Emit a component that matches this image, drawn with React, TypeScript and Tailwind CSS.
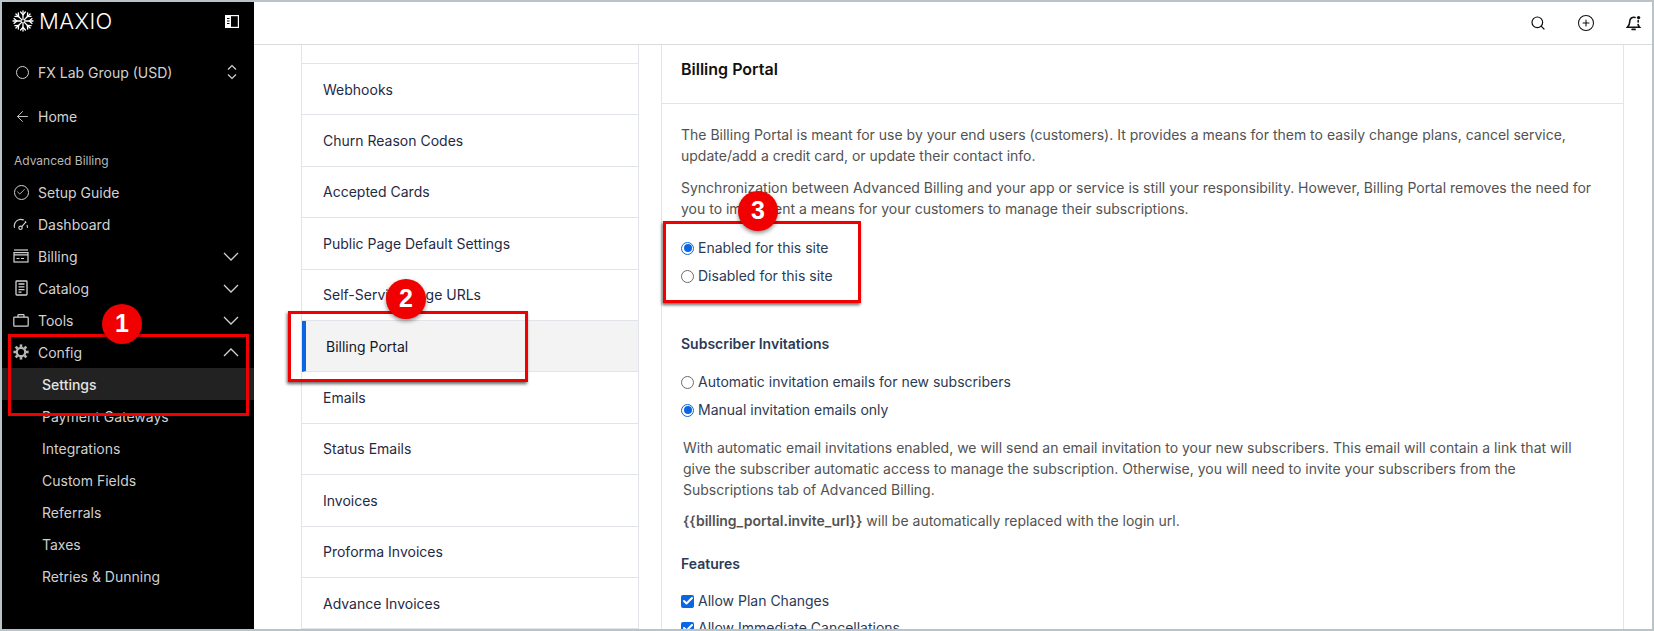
import { ArrowLeft, Check, Search, CirclePlus } from 'lucide-react';

const listRows = ['Webhooks', 'Churn Reason Codes', 'Accepted Cards', 'Public Page Default Settings', 'Self-Service Page URLs'];
const listRowsAfter = ['Emails', 'Status Emails', 'Invoices', 'Proforma Invoices', 'Advance Invoices'];
const subItems = ['Payment Gateways', 'Integrations', 'Custom Fields', 'Referrals', 'Taxes', 'Retries & Dunning'];

function MaxioLogo() {
  const spokes = [0, 45, 90, 135, 180, 225, 270, 315];
  return (
    <svg width="22" height="22" viewBox="0 0 22 22" fill="none" stroke="white" strokeWidth="1.3" strokeLinecap="round">
      {spokes.map((a) => (
        <g key={a} transform={`rotate(${a} 11 11)`}>
          <path d="M11 9.4V1" />
          <path d="M8.6 2L11 4.8L13.4 2" />
        </g>
      ))}
    </svg>
  );
}

function GaugeIcon() {
  return (
    <svg width="17" height="17" viewBox="0 0 17 17" fill="none" stroke="currentColor" strokeWidth="1.2" strokeLinecap="round">
      <path d="M1.5 11.5A7 7 0 0 1 11 3.6" />
      <path d="M13 5.5l.6.8M15 9.5l.4 2" />
      <circle cx="8" cy="12" r="1.8" />
      <path d="M9.3 10.7L13.5 6" />
    </svg>
  );
}

function CardIcon() {
  return (
    <svg width="16" height="14" viewBox="0 0 16 14" fill="none" stroke="currentColor" strokeWidth="1.2">
      <path d="M1 1h14" />
      <rect x="1" y="3.6" width="14" height="9.4" />
      <path d="M1 5.8h14M3.5 9.5h3M8 9.5h3" />
    </svg>
  );
}

function CatalogIcon() {
  return (
    <svg width="13" height="16" viewBox="0 0 13 16" fill="none" stroke="currentColor" strokeWidth="1.3">
      <rect x="1" y="1" width="11" height="14" rx="0.8" />
      <path d="M3.5 4h6M3.5 6.8h6M3.5 9.6h6M3.5 12.2h3" />
    </svg>
  );
}

function ToolsIcon() {
  return (
    <svg width="16" height="13" viewBox="0 0 16 13" fill="none" stroke="currentColor" strokeWidth="1.2">
      <rect x="0.8" y="3.2" width="14.4" height="9" rx="0.8" />
      <path d="M5 3.2V1.2a.5.5 0 0 1 .5-.5h5a.5.5 0 0 1 .5.5v2" />
    </svg>
  );
}

function GearIcon() {
  const teeth = [0, 45, 90, 135, 180, 225, 270, 315];
  return (
    <svg width="16" height="16" viewBox="0 0 16 16" fill="none" stroke="#b5b5b5">
      {teeth.map((a) => (
        <path key={a} d="M8 0.4V3" strokeWidth="2.6" transform={`rotate(${a} 8 8)`} />
      ))}
      <circle cx="8" cy="8" r="4.2" strokeWidth="2.2" />
    </svg>
  );
}

function SpreadChevrons() {
  return (
    <svg width="12" height="16" viewBox="0 0 12 16" fill="none" stroke="currentColor" strokeWidth="1.2">
      <path d="M2 5.5L6 1.5L10 5.5" />
      <path d="M2 10.5L6 14.5L10 10.5" />
    </svg>
  );
}

function Chevron({ up }: { up?: boolean }) {
  return (
    <svg width="16" height="9" viewBox="0 0 16 9" fill="none" stroke="currentColor" strokeWidth="1.3">
      <path d={up ? 'M1 8L8 1L15 8' : 'M1 1L8 8L15 1'} />
    </svg>
  );
}

function CollapseIcon() {
  return (
    <svg width="14" height="13" viewBox="0 0 14 13">
      <rect x="0.6" y="0.6" width="12.8" height="11.8" fill="none" stroke="white" strokeWidth="1.2" />
      <rect x="0.6" y="0.6" width="5.4" height="11.8" fill="white" />
      <path d="M2 3.5h2.5M2 6h2.5M2 8.5h2.5" stroke="black" strokeWidth="1" />
    </svg>
  );
}

function BellIcon() {
  return (
    <svg width="16" height="16" viewBox="0 0 16 16" fill="none" stroke="#111" strokeWidth="1.6" strokeLinecap="round">
      <path d="M9 2.4A4 4 0 0 0 3.8 6.2C3.8 9.6 2.6 11 1.4 12.2H13.6C13 11.6 12.4 10.8 12.1 9.5" />
      <path d="M6.2 14.4H9" strokeWidth="1.8" />
      <circle cx="12.6" cy="2.6" r="1.7" fill="#111" stroke="none" />
      <path d="M12.2 5.6v1.4" />
    </svg>
  );
}

function NavRow({ icon, label, chevron }: { icon: React.ReactNode; label: string; chevron?: 'down' | 'up' }) {
  return (
    <div className="flex h-8 items-center pl-[11px] pr-[15px] text-[#d2d2d2]">
      <span className="flex w-[16px] justify-center">{icon}</span>
      <span className="ml-[9px] flex-1 text-[14px]">{label}</span>
      {chevron === 'down' && <Chevron />}
      {chevron === 'up' && <Chevron up />}
    </div>
  );
}

function Radio({ checked, label }: { checked?: boolean; label: string }) {
  return (
    <div className="flex items-center gap-[4px] text-[14px] leading-[20px] text-[#2b3a55]">
      {checked ? (
        <span className="flex h-[13px] w-[13px] items-center justify-center rounded-full border-[1.5px] border-[#0b66e4]">
          <span className="h-[8px] w-[8px] rounded-full bg-[#0b66e4]" />
        </span>
      ) : (
        <span className="h-[13px] w-[13px] rounded-full border border-[#6b6b6b]" />
      )}
      <span>{label}</span>
    </div>
  );
}

function Checkbox({ label }: { label: string }) {
  return (
    <div className="flex items-center gap-[4px] text-[14px] leading-[20px] text-[#2b3a55]">
      <span className="flex h-[13px] w-[13px] items-center justify-center rounded-[2px] bg-[#0b66e4]">
        <Check size={12} strokeWidth={4} color="white" />
      </span>
      <span>{label}</span>
    </div>
  );
}

function Marker({ n, className }: { n: number; className: string }) {
  return (
    <div className={`absolute flex h-[40px] w-[40px] items-center justify-center rounded-full bg-[#f00000] font-['Liberation_Sans',sans-serif] text-[25px] font-bold text-white shadow-[0_2px_4px_rgba(0,0,0,0.45)] ${className}`}>
      {n}
    </div>
  );
}

export default function App() {
  return (
    <div className="relative h-[631px] w-[1654px] overflow-hidden border-2 border-[#b9c4c9] bg-white font-['Inter',sans-serif]">
      <div className="flex h-full">
        {/* Sidebar */}
        <aside className="flex h-full w-[252px] shrink-0 flex-col bg-black">
          <div className="flex h-[38px] items-center pl-[10px] pr-[15px]">
            <MaxioLogo />
            <span className="ml-[5px] flex-1 text-[22px] font-light leading-none tracking-[0.4px] text-white">MAXIO</span>
            <CollapseIcon />
          </div>
          <div className="mt-[16px] flex h-8 items-center pl-[14px] pr-[16px] text-[#d2d2d2]">
            <span className="h-[13px] w-[13px] rounded-full border-[1.5px] border-[#d2d2d2]" />
            <span className="ml-[9px] flex-1 text-[14px]">FX Lab Group (USD)</span>
            <SpreadChevrons />
          </div>
          <div className="mt-[12px] flex h-8 items-center pl-[12px] text-[#d2d2d2]">
            <ArrowLeft size={17} strokeWidth={1.3} />
            <span className="ml-[7px] text-[14px]">Home</span>
          </div>
          <div className="mt-[13px] flex h-8 items-center pl-[12px] text-[12px] text-[#b9b9b9]">Advanced Billing</div>
          <div className="-mt-[1px]">
            <NavRow
              label="Setup Guide"
              icon={
                <span className="flex h-[15px] w-[15px] items-center justify-center rounded-full border border-[#d2d2d2]">
                  <Check size={10} strokeWidth={2} />
                </span>
              }
            />
            <NavRow label="Dashboard" icon={<GaugeIcon />} />
            <NavRow label="Billing" icon={<CardIcon />} chevron="down" />
            <NavRow label="Catalog" icon={<CatalogIcon />} chevron="down" />
            <NavRow label="Tools" icon={<ToolsIcon />} chevron="down" />
            <NavRow label="Config" icon={<GearIcon />} chevron="up" />
            <div className="flex h-8 items-center bg-[#222222] pl-[40px] text-[14px] font-medium text-[#e4e4e4]">Settings</div>
            {subItems.map((item) => (
              <div key={item} className="flex h-8 items-center pl-[40px] text-[14px] text-[#cfcfcf]">
                {item}
              </div>
            ))}
          </div>
        </aside>

        {/* Main */}
        <main className="flex h-full min-w-0 flex-1 flex-col">
          <header className="flex h-[43px] shrink-0 items-center justify-end gap-[31px] border-b border-[#d9dcdf] pr-[10px]">
            <Search size={16} strokeWidth={1.8} color="#111" />
            <CirclePlus size={18} strokeWidth={1.4} color="#111" />
            <BellIcon />
          </header>
          <div className="flex min-h-0 flex-1 overflow-hidden pl-[47px]">
            {/* Settings list */}
            <div className="w-[338px] shrink-0 border-x border-[#e1e4e8]">
              <div className="h-[19px] border-b border-[#e1e4e8]" />
              {listRows.map((row) => (
                <div key={row} className="flex h-[51.4px] items-center border-b border-[#e1e4e8] pl-[21px] text-[14px] text-[#1f2a44]">
                  {row}
                </div>
              ))}
              <div className="flex h-[51.4px] items-center border-b border-[#e1e4e8] border-l-[4px] border-l-[#0b66e4] bg-[#f3f3f3] pl-[20px] text-[14px] text-[#111827]">
                Billing Portal
              </div>
              {listRowsAfter.map((row) => (
                <div key={row} className="flex h-[51.4px] items-center border-b border-[#e1e4e8] pl-[21px] text-[14px] text-[#1f2a44]">
                  {row}
                </div>
              ))}
            </div>

            {/* Billing portal panel */}
            <div className="ml-[22px] w-[963px] shrink-0 border-x border-[#e1e4e8]">
              <div className="flex h-[59px] items-center border-b border-[#e1e4e8] pb-[11px] pl-[19px] text-[16px] font-semibold text-[#111111]">
                Billing Portal
              </div>
              <div className="pl-[19px] pr-[24px] text-[14px] leading-[21px] text-[#525252]">
                <p className="mt-[20px]">
                  The Billing Portal is meant for use by your end users (customers). It provides a means for them to easily change plans, cancel service, update/add a credit card, or update their contact info.
                </p>
                <p className="mt-[11px]">
                  Synchronization between Advanced Billing and your app or service is still your responsibility. However, Billing Portal removes the need for you to implement a means for your customers to manage their subscriptions.
                </p>
                <div className="mt-[19px] flex flex-col gap-[8px]">
                  <Radio checked label="Enabled for this site" />
                  <Radio label="Disabled for this site" />
                </div>
                <h3 className="mt-[47px] text-[14px] font-semibold text-[#2b3a55]">Subscriber Invitations</h3>
                <div className="mt-[18px] flex flex-col gap-[8px]">
                  <Radio label="Automatic invitation emails for new subscribers" />
                  <Radio checked label="Manual invitation emails only" />
                </div>
                <p className="mt-[17px] pl-[2px]">
                  With automatic email invitations enabled, we will send an email invitation to your new subscribers. This email will contain a link that will give the subscriber automatic access to manage the subscription. Otherwise, you will need to invite your subscribers from the Subscriptions tab of Advanced Billing.
                </p>
                <p className="mt-[10px] pl-[2px]">
                  <span className="font-semibold">{'{{billing_portal.invite_url}}'}</span> will be automatically replaced with the login url.
                </p>
                <h3 className="mt-[22px] text-[14px] font-semibold text-[#2b3a55]">Features</h3>
                <div className="mt-[17px] flex flex-col gap-[7px]">
                  <Checkbox label="Allow Plan Changes" />
                  <Checkbox label="Allow Immediate Cancellations" />
                </div>
              </div>
            </div>
          </div>
        </main>
      </div>

      {/* Annotation overlays */}
      <div className="absolute left-[6px] top-[332px] h-[82px] w-[241px] border-[3px] border-[#f00000]" />
      <div className="absolute left-[286px] top-[309px] h-[71px] w-[240px] border-[3px] border-[#f00000] shadow-[-1px_2px_3px_rgba(0,0,0,0.6)]" />
      <div className="absolute left-[661px] top-[219px] h-[82px] w-[198px] border-[3px] border-[#f00000] shadow-[-1px_2px_3px_rgba(0,0,0,0.6)]" />
      <Marker n={1} className="left-[100px] top-[302px]" />
      <Marker n={2} className="left-[384px] top-[277px]" />
      <Marker n={3} className="left-[736px] top-[189px]" />
    </div>
  );
}
